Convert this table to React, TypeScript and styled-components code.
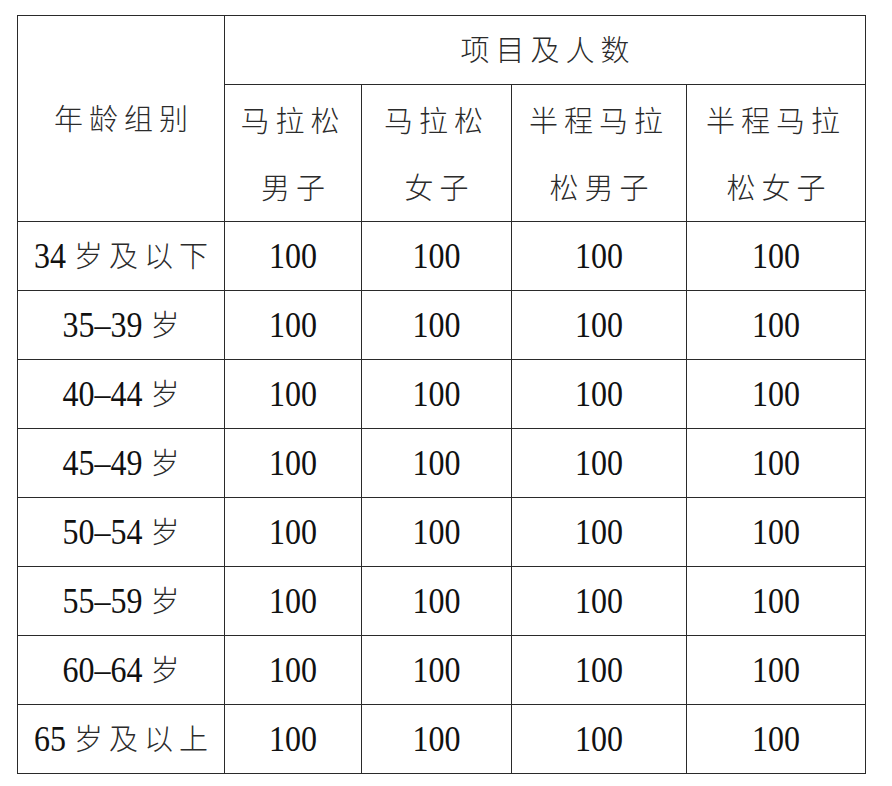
import React from "react";
import styled, { createGlobalStyle } from "styled-components";

const GlobalStyle = createGlobalStyle`
  html, body {
    margin: 0;
    padding: 0;
    background: #ffffff;
  }
`;

const Page = styled.div`
  padding: 15px 0 0 17px;
`;

const Table = styled.table`
  border-collapse: collapse;
  table-layout: fixed;
  width: 848px;
  color: #111111;
  font-family: "Liberation Serif", "Times New Roman", serif;
`;

const Cell = styled.td<{ $h?: number }>`
  border: 1.3px solid #2a2a2a;
  padding: 0;
  height: ${(p) => p.$h ?? 68}px;
  text-align: center;
  vertical-align: middle;
  font-size: 32px;
  line-height: 1;
  white-space: nowrap;
`;

const Han = styled.span<{ $lh?: number }>`
  font-family: "Noto Sans CJK SC", sans-serif;
  font-size: 29px;
  font-weight: 300;
  letter-spacing: 6px;
  line-height: ${(p) => p.$lh ?? 1};
  color: #2b2b2b;
  margin-right: -6px;
`;

const Num = styled.span<{ $gap?: number }>`
  display: inline-block;
  transform: scaleY(1.12);
  margin-right: ${(p) => p.$gap ?? 0}px;
`;

const groups = [
  { age: "34", tail: "岁及以下" },
  { age: "35–39", tail: "岁" },
  { age: "40–44", tail: "岁" },
  { age: "45–49", tail: "岁" },
  { age: "50–54", tail: "岁" },
  { age: "55–59", tail: "岁" },
  { age: "60–64", tail: "岁" },
  { age: "65", tail: "岁及以上" },
];

const events = [
  ["马拉松", "男子"],
  ["马拉松", "女子"],
  ["半程马拉", "松男子"],
  ["半程马拉", "松女子"],
];

export default function App() {
  return (
    <Page>
      <GlobalStyle />
      <Table>
        <colgroup>
          <col style={{ width: 207 }} />
          <col style={{ width: 137 }} />
          <col style={{ width: 150 }} />
          <col style={{ width: 175 }} />
          <col style={{ width: 179 }} />
        </colgroup>
        <tbody>
          <tr>
            <Cell rowSpan={2}>
              <Han>年龄组别</Han>
            </Cell>
            <Cell colSpan={4} $h={68}>
              <Han>项目及人数</Han>
            </Cell>
          </tr>
          <tr>
            {events.map(([a, b], i) => (
              <Cell key={i} $h={136}>
                <Han $lh={2.3}>
                  {a}
                  <br />
                  {b}
                </Han>
              </Cell>
            ))}
          </tr>
          {groups.map((g) => (
            <tr key={g.age}>
              <Cell>
                <Num $gap={8}>{g.age}</Num>
                <Han>{g.tail}</Han>
              </Cell>
              {events.map((_, i) => (
                <Cell key={i}>
                  <Num>100</Num>
                </Cell>
              ))}
            </tr>
          ))}
        </tbody>
      </Table>
    </Page>
  );
}
